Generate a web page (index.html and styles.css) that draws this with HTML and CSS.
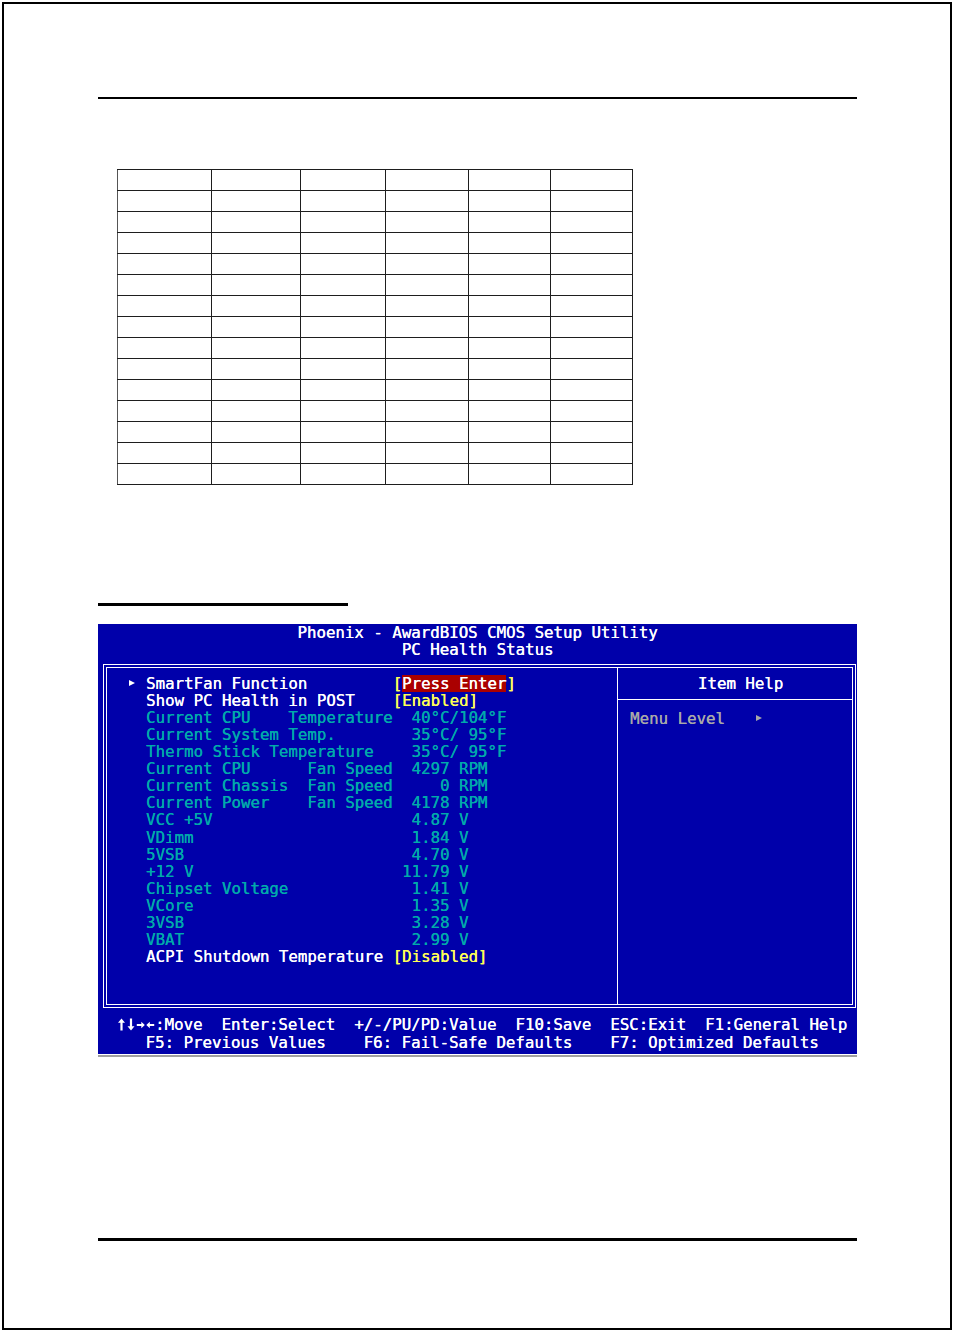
FILE: index.html
```html
<!DOCTYPE html>
<html>
<head>
<meta charset="utf-8">
<title>PC Health Status</title>
<link rel="stylesheet" href="styles.css">
</head>
<body>
<div class="page">
  <div class="rule rule-top"></div>

  <table class="spec">
    <colgroup>
      <col class="w1"><col class="w2"><col class="w3"><col class="w4"><col class="w5"><col class="w6">
    </colgroup>
    <tbody>
      <tr><td></td><td></td><td></td><td></td><td></td><td></td></tr>
      <tr><td></td><td></td><td></td><td></td><td></td><td></td></tr>
      <tr><td></td><td></td><td></td><td></td><td></td><td></td></tr>
      <tr><td></td><td></td><td></td><td></td><td></td><td></td></tr>
      <tr><td></td><td></td><td></td><td></td><td></td><td></td></tr>
      <tr><td></td><td></td><td></td><td></td><td></td><td></td></tr>
      <tr><td></td><td></td><td></td><td></td><td></td><td></td></tr>
      <tr><td></td><td></td><td></td><td></td><td></td><td></td></tr>
      <tr><td></td><td></td><td></td><td></td><td></td><td></td></tr>
      <tr><td></td><td></td><td></td><td></td><td></td><td></td></tr>
      <tr><td></td><td></td><td></td><td></td><td></td><td></td></tr>
      <tr><td></td><td></td><td></td><td></td><td></td><td></td></tr>
      <tr><td></td><td></td><td></td><td></td><td></td><td></td></tr>
      <tr><td></td><td></td><td></td><td></td><td></td><td></td></tr>
      <tr><td></td><td></td><td></td><td></td><td></td><td></td></tr>
    </tbody>
  </table>

  <div class="rule rule-section"></div>

  <div class="bios">
    <div class="bios-title">
      <div>Phoenix - AwardBIOS CMOS Setup Utility</div>
      <div>PC Health Status</div>
    </div>

    <div class="frame">
      <div class="frame-inner">
        <div class="main">
          <div class="row white"><span class="mark"><svg class="tri" width="6" height="6" viewBox="0 0 6 6"><path d="M0 0L6 3L0 6Z" fill="#ffffff"/></svg></span><span class="label">SmartFan Function</span><span class="value"><span class="yellow">[</span><span class="sel">Press Enter</span><span class="yellow">]</span></span></div>
          <div class="row white"><span class="mark"></span><span class="label">Show PC Health in POST</span><span class="value yellow">[Enabled]</span></div>
          <div class="row teal"><span class="mark"></span><span class="label">Current CPU    Temperature</span><span class="value">  40°C/104°F</span></div>
          <div class="row teal"><span class="mark"></span><span class="label">Current System Temp.</span><span class="value">  35°C/ 95°F</span></div>
          <div class="row teal"><span class="mark"></span><span class="label">Thermo Stick Temperature</span><span class="value">  35°C/ 95°F</span></div>
          <div class="row teal"><span class="mark"></span><span class="label">Current CPU      Fan Speed</span><span class="value">  4297 RPM</span></div>
          <div class="row teal"><span class="mark"></span><span class="label">Current Chassis  Fan Speed</span><span class="value">     0 RPM</span></div>
          <div class="row teal"><span class="mark"></span><span class="label">Current Power    Fan Speed</span><span class="value">  4178 RPM</span></div>
          <div class="row teal"><span class="mark"></span><span class="label">VCC +5V</span><span class="value">  4.87 V</span></div>
          <div class="row teal"><span class="mark"></span><span class="label">VDimm</span><span class="value">  1.84 V</span></div>
          <div class="row teal"><span class="mark"></span><span class="label">5VSB</span><span class="value">  4.70 V</span></div>
          <div class="row teal"><span class="mark"></span><span class="label">+12 V</span><span class="value"> 11.79 V</span></div>
          <div class="row teal"><span class="mark"></span><span class="label">Chipset Voltage</span><span class="value">  1.41 V</span></div>
          <div class="row teal"><span class="mark"></span><span class="label">VCore</span><span class="value">  1.35 V</span></div>
          <div class="row teal"><span class="mark"></span><span class="label">3VSB</span><span class="value">  3.28 V</span></div>
          <div class="row teal"><span class="mark"></span><span class="label">VBAT</span><span class="value">  2.99 V</span></div>
          <div class="row white"><span class="mark"></span><span class="label">ACPI Shutdown Temperature</span><span class="value yellow">[Disabled]</span></div>
        </div>

        <div class="help">
          <div class="help-head">Item Help</div>
          <div class="help-body"><span>Menu Level</span><svg class="tri tri-help" width="6" height="6" viewBox="0 0 6 6"><path d="M0 0L6 3L0 6Z" fill="#a8a8a8"/></svg></div>
        </div>
      </div>
    </div>

    <div class="footer">
      <div class="line"><svg class="keys" width="38" height="13" viewBox="0 0 38 13" aria-label="↑↓→←"><g fill="#ffffff"><path d="M4.5 0.5L8 4.8H5.6V12.5H3.4V4.8H1Z"/><path d="M14 12.5L17.5 8.2H15.1V0.5H12.9V8.2H10.5Z"/><path d="M27.8 7L24.3 3.8V6H19.8V8H24.3V10.2Z"/><path d="M29.3 7L32.8 3.8V6H37.2V8H32.8V10.2Z"/></g></svg>:Move  Enter:Select  +/-/PU/PD:Value  F10:Save  ESC:Exit  F1:General Help</div>
      <div class="line">   F5: Previous Values    F6: Fail-Safe Defaults    F7: Optimized Defaults</div>
    </div>
  </div>

  <div class="rule rule-bottom"></div>
</div>
</body>
</html>
```

FILE: styles.css
```css
* {
  box-sizing: border-box;
}

html, body {
  margin: 0;
  padding: 0;
  background: #ffffff;
}

.page {
  margin: 2px;
  width: 950px;
  height: 1328px;
  border: 2px solid #000000;
  padding: 0 0 0 94px;
  font-family: "Liberation Sans", Arial, sans-serif;
}

.rule {
  background: #000000;
}

.rule-top {
  margin-top: 93px;
  width: 759px;
  height: 2px;
}

.rule-section {
  margin-top: 118px;
  width: 250px;
  height: 3px;
}

.rule-bottom {
  margin-top: 184px;
  width: 759px;
  height: 3px;
}

/* empty specification table */
.spec {
  margin: 70px 0 0 19px;
  width: 515px;
  border-collapse: collapse;
  table-layout: fixed;
}

.spec .w1 { width: 94px; }
.spec .w2 { width: 89px; }
.spec .w3 { width: 85px; }
.spec .w4 { width: 83px; }
.spec .w5 { width: 82px; }
.spec .w6 { width: 82px; }

.spec tr {
  height: 21px;
}

.spec td {
  padding: 0;
  border: 1px solid #1e1e1e;
}

.spec td:first-child {
  border-left-color: #555555;
}

/* BIOS screen */
.bios {
  margin-top: 18px;
  width: 759px;
  height: 430px;
  background: #0000aa;
  color: #ffffff;
  font-family: "DejaVu Sans Mono", "Liberation Mono", monospace;
  font-size: 15.76px;
  line-height: 17.1px;
  text-shadow: 0.35px 0 0 currentColor;
  box-shadow: 0 1px 0 #ffffff, 0 3px 0 #a0a0a0;
}

.bios-title {
  text-align: center;
}

.frame {
  margin: 6px 1px 0 5px;
  height: 344px;
  border: 1px solid #ffffff;
  padding: 2px;
}

.frame-inner {
  height: 100%;
  border: 1px solid #ffffff;
  display: flex;
}

.main {
  width: 511px;
  border-right: 1px solid #ffffff;
  padding: 6.5px 0 0 20px;
}

.row {
  display: flex;
  height: 17.1px;
  white-space: pre;
}

.mark {
  width: 19px;
  display: flex;
  align-items: center;
}

.mark .tri {
  margin-left: 2px;
}

.label {
  width: 26ch;
  flex: none;
}

.value {
  white-space: pre;
}

.white { color: #ffffff; }
.teal { color: #00aaaa; }
.yellow { color: #ffff55; }

.sel {
  display: inline-block;
  height: 17.1px;
  background: #aa0000;
  color: #ffffff;
}

.help {
  flex: 1;
}

.help-head {
  padding: 6.5px 0 7.4px 11px;
  text-align: center;
  border-bottom: 1px solid #ffffff;
}

.help-body {
  padding: 9.6px 0 0 12px;
  color: #a8a8a8;
  display: flex;
  align-items: center;
  height: 17.1px;
  box-sizing: content-box;
}

.tri-help {
  margin-left: 31px;
}

.footer {
  margin-top: 8.3px;
  padding-left: 19px;
}

.footer .line {
  white-space: pre;
  height: 17.1px;
}

.keys {
  vertical-align: -1px;
}
```
